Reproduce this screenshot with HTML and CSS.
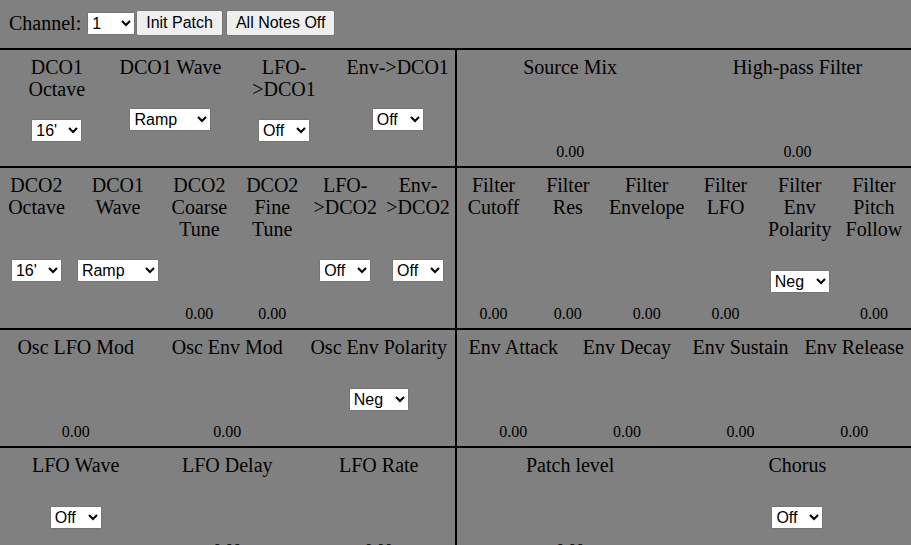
FILE: index.html
```html
<!DOCTYPE html>
<html lang="en">
<head>
<meta charset="utf-8">
<title>Patch Editor</title>
<link rel="stylesheet" href="styles.css">
</head>
<body>
<header class="topbar">
  <span class="ch-label">Channel:</span>
  <select class="ch-select">
    <option>1</option><option>2</option><option>3</option><option>4</option>
    <option>5</option><option>6</option><option>7</option><option>8</option>
    <option>9</option><option>10</option><option>11</option><option>12</option>
    <option>13</option><option>14</option><option>15</option><option>16</option>
  </select>
  <button class="btn">Init Patch</button>
  <button class="btn btn-second">All Notes Off</button>
</header>

<main class="panel">
  <section class="cell">
    <div class="ctl"><div class="lbl">DCO1 Octave</div><select><option>16'</option><option>8'</option><option>4'</option></select></div>
    <div class="ctl"><div class="lbl">DCO1 Wave</div><select><option>Ramp</option><option>Square</option></select></div>
    <div class="ctl"><div class="lbl">LFO-&gt;DCO1</div><select><option>Off</option><option>On</option></select></div>
    <div class="ctl"><div class="lbl">Env-&gt;DCO1</div><select><option>Off</option><option>On</option></select></div>
  </section>
  <section class="cell">
    <div class="ctl"><div class="lbl">Source Mix</div><div class="knob"></div><div class="val">0.00</div></div>
    <div class="ctl"><div class="lbl">High-pass Filter</div><div class="knob"></div><div class="val">0.00</div></div>
  </section>

  <section class="cell">
    <div class="ctl"><div class="lbl">DCO2 Octave</div><select><option>16'</option><option>8'</option><option>4'</option></select></div>
    <div class="ctl"><div class="lbl">DCO1 Wave</div><select><option>Ramp</option><option>Square</option></select></div>
    <div class="ctl"><div class="lbl">DCO2 Coarse Tune</div><div class="knob"></div><div class="val">0.00</div></div>
    <div class="ctl"><div class="lbl">DCO2 Fine Tune</div><div class="knob"></div><div class="val">0.00</div></div>
    <div class="ctl"><div class="lbl">LFO-&gt;DCO2</div><select><option>Off</option><option>On</option></select></div>
    <div class="ctl"><div class="lbl">Env-&gt;DCO2</div><select><option>Off</option><option>On</option></select></div>
  </section>
  <section class="cell">
    <div class="ctl"><div class="lbl">Filter Cutoff</div><div class="knob"></div><div class="val">0.00</div></div>
    <div class="ctl"><div class="lbl">Filter Res</div><div class="knob"></div><div class="val">0.00</div></div>
    <div class="ctl"><div class="lbl">Filter Envelope</div><div class="knob"></div><div class="val">0.00</div></div>
    <div class="ctl"><div class="lbl">Filter LFO</div><div class="knob"></div><div class="val">0.00</div></div>
    <div class="ctl"><div class="lbl">Filter Env Polarity</div><select><option>Neg</option><option>Pos</option></select></div>
    <div class="ctl"><div class="lbl">Filter Pitch Follow</div><div class="knob"></div><div class="val">0.00</div></div>
  </section>

  <section class="cell">
    <div class="ctl"><div class="lbl">Osc LFO Mod</div><div class="knob"></div><div class="val">0.00</div></div>
    <div class="ctl"><div class="lbl">Osc Env Mod</div><div class="knob"></div><div class="val">0.00</div></div>
    <div class="ctl"><div class="lbl">Osc Env Polarity</div><select><option>Neg</option><option>Pos</option></select></div>
  </section>
  <section class="cell">
    <div class="ctl"><div class="lbl">Env Attack</div><div class="knob"></div><div class="val">0.00</div></div>
    <div class="ctl"><div class="lbl">Env Decay</div><div class="knob"></div><div class="val">0.00</div></div>
    <div class="ctl"><div class="lbl">Env Sustain</div><div class="knob"></div><div class="val">0.00</div></div>
    <div class="ctl"><div class="lbl">Env Release</div><div class="knob"></div><div class="val">0.00</div></div>
  </section>

  <section class="cell">
    <div class="ctl"><div class="lbl">LFO Wave</div><select><option>Off</option><option>On</option></select></div>
    <div class="ctl"><div class="lbl">LFO Delay</div><div class="knob"></div><div class="val">0.00</div></div>
    <div class="ctl"><div class="lbl">LFO Rate</div><div class="knob"></div><div class="val">0.00</div></div>
  </section>
  <section class="cell">
    <div class="ctl"><div class="lbl">Patch level</div><div class="knob"></div><div class="val">0.00</div></div>
    <div class="ctl"><div class="lbl">Chorus</div><select><option>Off</option><option>I</option><option>II</option></select></div>
  </section>
</main>
</body>
</html>
```

FILE: styles.css
```css
html {
  overflow: hidden;
}

body {
  margin: 0;
  background: #808080;
  color: #000;
  font-family: "Liberation Serif", "Times New Roman", serif;
  font-size: 20px;
}

select,
button {
  font-family: "Liberation Sans", Arial, sans-serif;
  font-size: 16px;
}

select {
  padding: 1px 8px 1px 0;
}

button {
  padding: 2px 8px;
}

.topbar {
  display: flex;
  align-items: center;
  height: 48px;
  box-sizing: border-box;
  padding: 0 0 2px 9px;
}

.ch-label {
  line-height: 1.107;
  margin-right: 6px;
}

.ch-select {
  margin-right: 1px;
}

.btn-second {
  margin-left: 3px;
}

.panel {
  display: grid;
  grid-template-columns: 1fr 1fr;
  gap: 2px;
  padding-top: 2px;
  background: #000;
}

.cell {
  display: flex;
  background: #808080;
  padding: 6px 0 5px;
}

.ctl {
  flex: 1 1 0;
  padding: 0 4px;
  display: flex;
  flex-direction: column;
  align-items: center;
  text-align: center;
}

.lbl {
  line-height: 1.107;
}

.knob {
  flex: 1 0 65px;
}

.val {
  font-size: 16px;
  line-height: 1.107;
}

.ctl select {
  margin: auto 0;
}
```
